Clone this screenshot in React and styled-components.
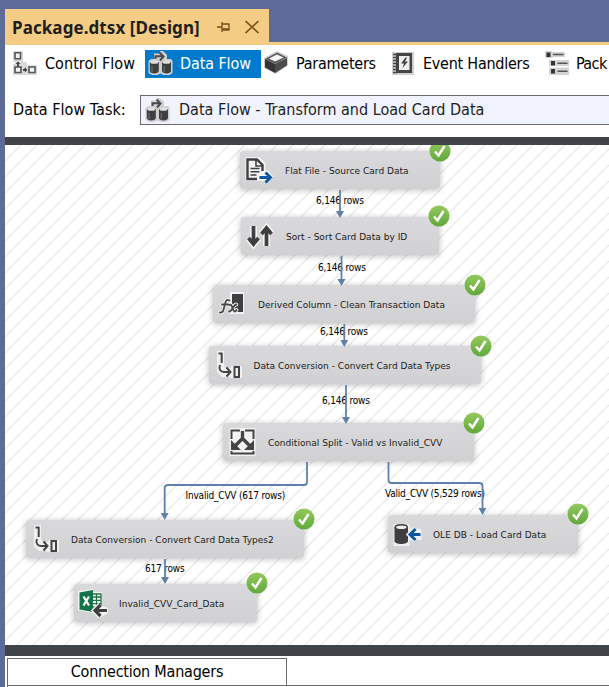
import React from "react";
import styled, { createGlobalStyle } from "styled-components";

const Global = createGlobalStyle`
  * { box-sizing: border-box; }
  html, body { margin: 0; overflow: hidden; }
`;

const uiFont = '"DejaVu Sans Condensed", "DejaVu Sans", sans-serif';

const Window = styled.div`
  width: 609px;
  height: 687px;
  padding: 9px 0 0 5px;
  background: #5d6b99;
  overflow: hidden;
  display: flex;
  flex-direction: column;
  font-family: ${uiFont};
  font-stretch: condensed;
  font-size: 16px;
  color: #000;
`;
const TabStrip = styled.div`
  height: 36px;
  flex: none;
  border-bottom: 3px solid #f5cc84;
`;
const FileTab = styled.div`
  width: 264px;
  height: 36px;
  padding-left: 7px;
  background: #f5cc84;
  display: flex;
  align-items: center;
  svg { flex: none; }
`;
const FileName = styled.span`
  width: 205px;
  font: bold 17px "Noto Sans", sans-serif;
  letter-spacing: 0.08px;
  color: #1e1e1e;
  white-space: nowrap;
`;
const TabActions = styled.div`
  display: flex;
  align-items: center;
  gap: 13px;
`;
const Toolbar = styled.div`
  height: 38px;
  flex: none;
  padding: 5px 0 5px 5px;
  background: #fff;
  display: flex;
`;
const ToolTab = styled.div`
  flex: none;
  width: ${(p) => p.$width}px;
  height: 28px;
  padding: 0 0 2px 3px;
  display: flex;
  align-items: center;
  gap: ${(p) => p.$gap || 8}px;
  background: ${(p) => (p.$active ? "#007acc" : "transparent")};
  color: ${(p) => (p.$active ? "#fff" : "#000")};
  letter-spacing: ${(p) => p.$spacing || 0}px;
  white-space: nowrap;
  svg { flex: none; }
`;
const TaskBar = styled.div`
  height: 54px;
  flex: none;
  padding: 12px 0 12px 8px;
  background: #fff;
  display: flex;
  align-items: stretch;
`;
const TaskLabel = styled.label`
  width: 127px;
  line-height: 30px;
  letter-spacing: 0.05px;
  white-space: nowrap;
`;
const Combo = styled.div`
  flex: 1;
  border: 1px solid #6b6b6e;
  border-right: 0;
  background: #f0f3fd;
  padding-left: 4px;
  display: flex;
  align-items: center;
  gap: 9px;
  color: #1e1e1e;
  line-height: 30px;
  white-space: nowrap;
  svg { flex: none; }
`;
const Divider = styled.div`
  flex: none;
  height: ${(p) => p.$height}px;
  background: #404347;
`;
const Canvas = styled.div`
  position: relative;
  flex: none;
  height: 500px;
  overflow: hidden;
  background: #fff linear-gradient(to bottom right, transparent calc(50% - 1px), #e5e5e5 50%, transparent calc(50% + 1px)) 0 0 / 16px 16px;
`;
const Connectors = styled.svg`
  position: absolute;
  inset: 0;
`;
const Node = styled.div`
  position: absolute;
  left: ${(p) => p.$x - 5}px;
  top: ${(p) => p.$y - 145}px;
  width: ${(p) => p.$w}px;
  height: 38px;
  padding-left: 4px;
  border-radius: 3px;
  background: linear-gradient(#d9d9db, #d1d1d3);
  box-shadow: 0 1px 6px rgba(0, 0, 0, 0.27);
  display: flex;
  align-items: center;
  gap: 11px;
  white-space: nowrap;
  svg { flex: none; }
`;
const NodeName = styled.span`
  font: 9px "DejaVu Sans", sans-serif;
  letter-spacing: 0.03px;
  color: #1b1b1b;
  padding-top: 2px;
`;
const Badge = styled.svg`
  position: absolute;
  right: -11px;
  top: -11.5px;
`;
const RowCount = styled.span`
  position: absolute;
  left: ${(p) => p.$x - 5}px;
  top: ${(p) => p.$y - 152}px;
  font-size: 10px;
  line-height: 14px;
  letter-spacing: -0.2px;
  white-space: nowrap;
`;
const Footer = styled.div`
  flex: 1;
  background: #fff;
  padding: 2px 0 0 2px;
`;
const FooterTab = styled.div`
  width: 280px;
  height: 27px;
  border: 1px solid #6b6b6e;
  border-bottom: 0;
  text-align: center;
  line-height: 26px;
  letter-spacing: -0.22px;
`;
const FooterPane = styled.div`
  height: 10px;
  border: 1px solid #6b6b6e;
  border-right: 0;
`;

const PinIcon = () => (
  <svg width="14" height="12" viewBox="0 0 14 12" fill="none" stroke="#75501d" strokeWidth="1.3">
    <path d="M0 6h5M5 1v10M5 3h7v6H5M5 8h7" />
  </svg>
);
const CloseIcon = () => (
  <svg width="16" height="14" viewBox="0 0 16 14" fill="none" stroke="#75501d" strokeWidth="1.7">
    <path d="M1.5 1l13 12M14.5 1l-13 12" />
  </svg>
);
const ControlFlowIcon = () => (
  <svg width="24" height="24" viewBox="0 0 24 24" fill="none">
    <path d="M0 0h10v11h4v3h10v10H0V13h2v-2H0z" fill="#dadadc" />
    <path d="M2 1.800h5.500v6H2zM2 16h6v5.500H2zM16 16h6v5.500h-6z" fill="#f5f5f5" stroke="#555" strokeWidth="1.6" />
    <path d="M5 16v-4M10 18.800h4" stroke="#444" strokeWidth="1.8" />
    <path d="M2.500 13L5 10.500 7.500 13zM13 16.300v5L10 18.800z" fill="#444" />
  </svg>
);
const DataFlowIcon = () => (
  <svg width="25" height="25" viewBox="0 0 25 25">
    <path d="M6 2.500h6V0h3l4 4v4h4l1.500 2v12l-3 2h-6l-3-1.500-3 1.500H4l-3.500-2V10L3 8h3z" fill="#cfcfd1" />
    <path d="M7.500 8V5.300h7M11.500 1.500l4 4-3.500 4" fill="none" stroke="#4a4a4c" strokeWidth="2" />
    <path d="M1.800 11v9c0 3.300 9 3.300 9 0v-9zM14 11v9c0 3.300 9 3.300 9 0v-9z" fill="#3f3f41" />
    <ellipse cx="6.300" cy="11.200" rx="4" ry="1.600" fill="#e0e0e0" />
    <ellipse cx="18.500" cy="11.200" rx="4" ry="1.600" fill="#e0e0e0" />
    <path d="M4 15v6M16.200 15v6" stroke="#777" strokeWidth="1" />
  </svg>
);
const ParametersIcon = () => (
  <svg width="24" height="24" viewBox="0 0 24 24">
    <path d="M0 7L13 0l11 5v9L12 23 0 17z" fill="#cfcfcf" />
    <path d="M1 8l10 5v9L1 16.500z" fill="#353535" />
    <path d="M11 13l12-6v7.500L11 22z" fill="#4c4c4c" />
    <path d="M1 8l12-6.500L23 6.500 11 13z" fill="#5c5c5c" />
    <path d="M5 7.500L13 3.500l6.500 3-8.500 4z" fill="#f4f4f4" />
  </svg>
);
const EventIcon = () => (
  <svg width="22" height="23" viewBox="0 0 22 23">
    <path d="M0 0h22v23H0z" fill="#d0d0d0" />
    <path d="M4 1h16v20H4z" fill="#444" />
    <path d="M7 4h10.500v14H7z" fill="#eee" />
    <path d="M13.500 5.500L9 11.500h3L10.500 16l5.500-6.500h-3l2-4z" fill="#444" />
    <path d="M1 2.500h4M1 5.500h4M1 8.500h4M1 11.500h4M1 14.500h4M1 17.500h4M1 20.500h4" stroke="#444" strokeWidth="1.500" />
  </svg>
);
const PackageIcon = () => (
  <svg width="24" height="24" viewBox="0 0 24 24">
    <path d="M0 0h7v1h13v5H8v1H0zM4 9h20v6H4zM4 16.500h20V24H4z" fill="#d4d4d6" />
    <path d="M1.500 1.500h4V6h-4zM6 10h4v4.500H6zM6 18h4v4.500H6z" fill="#333" />
    <path d="M8 3.500h10.500M12.500 12.200h10M12.500 20.200h10" stroke="#555" strokeWidth="1.600" />
  </svg>
);

const FlatFileIcon = () => (
  <svg width="30" height="30" viewBox="0 0 30 30" fill="none">
    <path d="M1.500 2h14l6 6v7h2l6 6.500-6 6.500-5-2H1.500z" fill="#f3f3f3" />
    <path d="M13 24H3.500V4.500h9.500l5.500 5.500v6" stroke="#3f3f41" strokeWidth="2.400" />
    <path d="M12 4v7h7" stroke="#3f3f41" strokeWidth="1.600" />
    <path d="M6.500 13.500h9M6.500 16.800h9M6.500 20h6" stroke="#3f3f41" strokeWidth="1.500" />
    <path d="M15.500 22.500h11M21.500 17.500l5 5-5 5" stroke="#0b57a4" strokeWidth="2.900" />
  </svg>
);
const SortIcon = () => (
  <svg width="30" height="30" viewBox="0 0 30 30" fill="none">
    {[{ stroke: "#f3f3f3", strokeWidth: 7 }, { stroke: "#3f3f41", strokeWidth: 3.7 }].map((s, i) => (
      <path key={i} {...s} d="M8.500 5v17M3.500 17l5 6 5-6M21.500 25V7M16.500 13l5-6 5 6" />
    ))}
  </svg>
);
const FormulaIcon = () => (
  <svg width="30" height="30" viewBox="0 0 30 30">
    <path d="M13 3h14v22H13z" fill="#f3f3f3" />
    <path d="M15 5h11v18H15z" fill="#3f3f41" />
    <g fill="none" strokeLinecap="round">
      {[{ stroke: "#f0f0f0", strokeWidth: 3.8 }, { stroke: "#4a4a4c", strokeWidth: 1.800 }].map((s, i) => (
        <path key={i} {...s} d="M12.500 11.500c-3-2-4 1-4.800 4.500-1 5-1.700 8.500-5 7.500M5 15.500h6.500M12.500 16c3-2 3 6.500 5 6.500 1 0 1.500-.5 2-1.500M19.500 15.500c-3-.5-4.500 7.500-7.500 7" />
      ))}
    </g>
  </svg>
);
const ConversionIcon = () => (
  <svg width="30" height="30" viewBox="0 0 30 30" fill="none">
    <path d="M4 1h7v12l1 5h6v-2h11v12H17v-1H9l-5-5z" fill="#f0f0f0" />
    <path d="M5.500 3.500h4M8.700 3v10M7 15c-1.500 4 .5 7 4 7h6M13.500 17.500l4 4.500-4 4.500M21.500 17h4.500v10h-4.500z" stroke="#444" strokeWidth="2" />
  </svg>
);
const SplitIcon = () => (
  <svg width="30" height="30" viewBox="0 0 30 30" fill="none">
    <path d="M2.500 1h26v28h-26z" fill="#f2f2f2" />
    <path d="M13 3.500H4.500V12M18 3.500h8.500V12M4.500 24v2.500h22V24" stroke="#444" strokeWidth="2" />
    <path d="M15.500 4v9M15.500 11.500L7 20M15.500 11.500l8.500 8.500" stroke="#444" strokeWidth="3.300" />
    <path d="M4 13V23h10zM27 13V23h-10z" fill="#444" />
  </svg>
);
const DatabaseIcon = () => (
  <svg width="30" height="30" viewBox="0 0 30 30">
    <path d="M1.500 5h16v5h12v11h-12v6h-16z" fill="#efeff0" />
    <path d="M2.500 8v14c0 4 13.500 4 13.500 0V8z" fill="#3f3f41" />
    <ellipse cx="9.300" cy="8.300" rx="6" ry="2.500" fill="#eee" stroke="#3f3f41" strokeWidth="1.500" />
    <path d="M28.500 15.500H18M23.500 10L18 15.500l5.500 5.500" fill="none" stroke="#f3f3f3" strokeWidth="6" />
    <path d="M28.500 15.500H18M23.500 10L18 15.500l5.500 5.500" fill="none" stroke="#0b57a4" strokeWidth="3" />
  </svg>
);
const ExcelIcon = () => (
  <svg width="30" height="30" viewBox="0 0 30 30">
    <path d="M0 3l15-2v3h9v14l6 2v5l-7 4-8-4-15-3z" fill="#f3f3f3" />
    <path d="M14 6h9v13h-9z" fill="#fff" stroke="#217346" strokeWidth="1.300" />
    <path d="M14 9h9M14 12.300h9M14 15.600h9M18.500 6v13" stroke="#217346" strokeWidth="1.300" />
    <path d="M1.500 4.500L15 2v22L1.500 21.500z" fill="#147346" />
    <path d="M5.500 8.500l5.500 9M11 8.500l-5.500 9" stroke="#fff" strokeWidth="2.200" />
    <path d="M29 22.500H17M22.500 17L17 22.500l5.500 5.500" fill="none" stroke="#f3f3f3" strokeWidth="6" />
    <path d="M29 22.500H17M22.500 17L17 22.500l5.500 5.500" fill="none" stroke="#3f3f41" strokeWidth="3.200" />
  </svg>
);

const SuccessBadge = () => (
  <Badge width="22" height="22" viewBox="0 0 22 22">
    <defs>
      <linearGradient id="ok" x1="0" y1="0" x2="0" y2="1">
        <stop offset="0" stopColor="#94c95f" />
        <stop offset="1" stopColor="#60a83a" />
      </linearGradient>
    </defs>
    <circle cx="11" cy="11" r="10.500" fill="url(#ok)" />
    <path d="M6 11.500l3.500 4 6-9.500" fill="none" stroke="#fff" strokeWidth="2.500" />
  </Badge>
);

const nodes = [
  { x: 240, y: 151, w: 199.5, name: "Flat File - Source Card Data", Icon: FlatFileIcon },
  { x: 241, y: 216.5, w: 198, name: "Sort - Sort Card Data by ID", Icon: SortIcon },
  { x: 213, y: 285, w: 262, name: "Derived Column - Clean Transaction Data", Icon: FormulaIcon },
  { x: 208.5, y: 346, w: 272, name: "Data Conversion - Convert Card Data Types", Icon: ConversionIcon },
  { x: 223, y: 423, w: 250.5, name: "Conditional Split - Valid vs Invalid_CVV", Icon: SplitIcon },
  { x: 26, y: 519.5, w: 277.5, name: "Data Conversion - Convert Card Data Types2", Icon: ConversionIcon },
  { x: 388, y: 514.5, w: 189.5, name: "OLE DB - Load Card Data", Icon: DatabaseIcon },
  { x: 74, y: 583.5, w: 182.5, name: "Invalid_CVV_Card_Data", Icon: ExcelIcon },
];
const counts = [
  [316, 200.5, "6,146 rows"],
  [318, 267.5, "6,146 rows"],
  [320, 331.5, "6,146 rows"],
  [322, 400.5, "6,146 rows"],
  [185.5, 495.5, "Invalid_CVV (617 rows)"],
  [385, 493.5, "Valid_CVV (5,529 rows)"],
  [145, 568.5, "617 rows"],
];
const edges = [
  ["M340 190V212", 340, 218],
  ["M341.500 256V280", 341.5, 286],
  ["M344.300 324V341", 344.3, 347],
  ["M346 385V418", 346, 424],
  ["M307 462V482Q307 485 304 485H168Q164.700 485 164.700 488V514", 164.7, 520],
  ["M388.500 462V480Q388.500 483 391.500 483H479.500Q482.500 483 482.500 486V509", 482.5, 515],
  ["M165 559V578", 165, 584],
];

export default function App() {
  return (
    <>
      <Global />
      <Window>
        <TabStrip>
          <FileTab>
            <FileName>Package.dtsx [Design]</FileName>
            <TabActions>
              <PinIcon />
              <CloseIcon />
            </TabActions>
          </FileTab>
        </TabStrip>
        <Toolbar>
          <ToolTab $width={135} $spacing={0.05}><ControlFlowIcon />Control Flow</ToolTab>
          <ToolTab $width={116} $active $gap={7} $spacing={-0.1}><DataFlowIcon />Data Flow</ToolTab>
          <ToolTab $width={128} $spacing={-0.25}><ParametersIcon />Parameters</ToolTab>
          <ToolTab $width={153} $gap={9} $spacing={-0.25}><EventIcon />Event Handlers</ToolTab>
          <ToolTab $width={67} $gap={7} $spacing={-0.6}><PackageIcon />Pack</ToolTab>
        </Toolbar>
        <TaskBar>
          <TaskLabel>Data Flow Task:</TaskLabel>
          <Combo><DataFlowIcon />Data Flow - Transform and Load Card Data</Combo>
        </TaskBar>
        <Divider $height={8} />
        <Canvas>
          {nodes.map(({ x, y, w, name, Icon }) => (
            <Node key={name} $x={x} $y={y} $w={w}>
              <Icon />
              <NodeName>{name}</NodeName>
              <SuccessBadge />
            </Node>
          ))}
          {counts.map(([x, y, text]) => (
            <RowCount key={`${x}-${y}`} $x={x} $y={y}>{text}</RowCount>
          ))}
          <Connectors width="604" height="500" viewBox="5 145 604 500">
            {edges.map(([d, x, y]) => (
              <g key={d}>
                <path d={d} fill="none" stroke="#6080ab" strokeWidth="1.800" />
                <path d={`M${x - 4} ${y - 7}h8l-4 7z`} fill="#6080ab" />
              </g>
            ))}
          </Connectors>
        </Canvas>
        <Divider $height={11} />
        <Footer>
          <FooterTab>Connection Managers</FooterTab>
          <FooterPane />
        </Footer>
      </Window>
    </>
  );
}
